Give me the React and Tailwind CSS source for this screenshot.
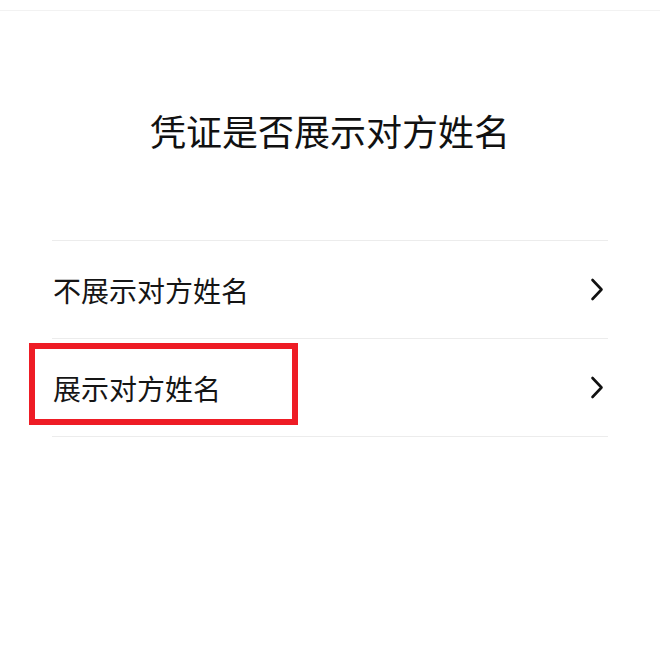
import React from "react";

function Chevron() {
  return (
    <svg width="14" height="23" viewBox="0 0 14 23" fill="none" className="block">
      <path d="M2.5 2 L11.5 11.5 L2.5 21" stroke="#111" strokeWidth="2.6" strokeLinecap="round" strokeLinejoin="round" />
    </svg>
  );
}

function Row({ label }) {
  return (
    <div className="flex h-[98px] items-center justify-between border-t border-[#ececec] pl-[1px] pr-[4px]">
      <span className="text-[28px] leading-none text-[#151515]">{label}</span>
      <Chevron />
    </div>
  );
}

export default function App() {
  return (
    <div
      className="relative h-[660px] w-[660px] overflow-hidden bg-white"
      style={{ fontFamily: '"Noto Sans CJK SC", "Noto Sans", sans-serif' }}
    >
      <div className="h-[10px]" />
      <div className="border-t border-[#f2f2f2]" />
      <div className="flex h-[229px] items-start justify-center pt-[101px]">
        <h1 className="text-[36px] font-normal leading-none text-[#111]">凭证是否展示对方姓名</h1>
      </div>
      <div className="mx-[52px] border-b border-[#ececec]">
        <Row label="不展示对方姓名" />
        <Row label="展示对方姓名" />
      </div>
      <div className="absolute left-[29px] top-[343px] h-[82px] w-[269px] border-[6px] border-[#ee1c25]" />
    </div>
  );
}
